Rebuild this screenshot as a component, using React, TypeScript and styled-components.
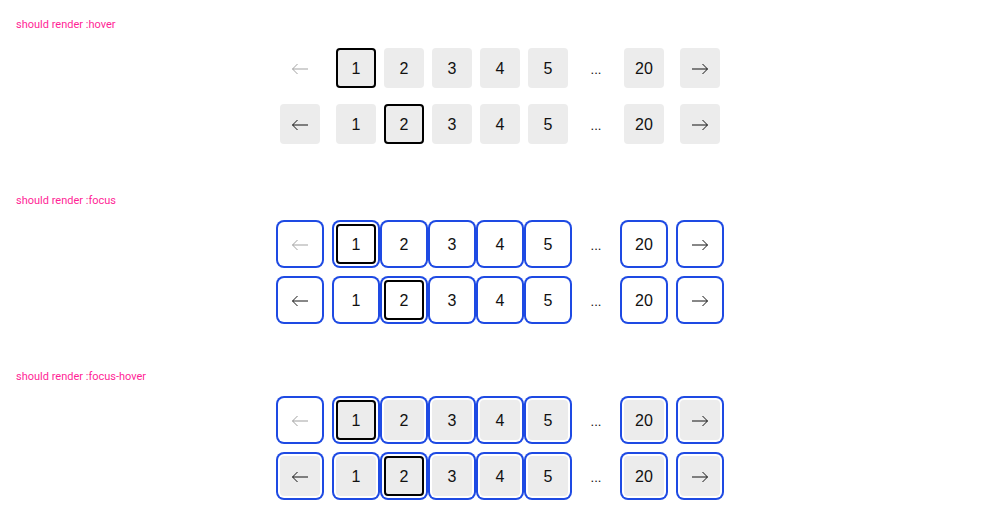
import React from 'react';
import styled, { createGlobalStyle, css } from 'styled-components';

type Mode = 'hover' | 'focus' | 'focus-hover';

const GlobalStyle = createGlobalStyle`
  html, body {
    margin: 0;
    padding: 0;
    background: #ffffff;
  }
`;

const Page = styled.div`
  width: 1000px;
  padding-top: 18px;
  box-sizing: border-box;
`;

const Section = styled.section`
  display: flex;
  flex-direction: column;
  margin-bottom: 50px;
`;

const Label = styled.div`
  font-family: Roboto, 'Liberation Sans', sans-serif;
  font-size: 11px;
  line-height: 13px;
  height: 12px;
  color: #ff1f96;
  padding-left: 16px;
  margin-bottom: 18px;
`;

const Rows = styled.div`
  display: flex;
  flex-direction: column;
  gap: 16px;
`;

const Row = styled.nav`
  display: flex;
  justify-content: center;
  align-items: center;
  gap: 16px;
`;

const Pages = styled.ul`
  display: flex;
  gap: 8px;
  margin: 0;
  padding: 0;
  list-style: none;
`;

const ring = css`
  box-shadow: 0 0 0 2px #ffffff, 0 0 0 4px #1e4ae3;
`;

const PageButton = styled.button<{ $mode: Mode; $selected?: boolean; $disabled?: boolean }>`
  width: 40px;
  height: 40px;
  box-sizing: border-box;
  display: flex;
  align-items: center;
  justify-content: center;
  padding: 1px 0 0;
  margin: 0;
  border-radius: 4px;
  border: 2px solid ${(p) => (p.$selected ? '#000000' : 'transparent')};
  font-family: 'Liberation Sans', Arial, sans-serif;
  font-size: 16px;
  color: ${(p) => (p.$disabled ? '#a3a3a3' : '#111111')};
  cursor: pointer;
  background: ${(p) =>
    p.$mode === 'focus' || p.$disabled ? '#ffffff' : '#ececec'};
  ${(p) => (p.$mode !== 'hover' ? ring : '')}
`;

const Ellipsis = styled.li`
  width: 40px;
  height: 40px;
  box-sizing: border-box;
  padding-top: 3px;
  display: flex;
  align-items: center;
  justify-content: center;
  font-family: 'Liberation Sans', Arial, sans-serif;
  font-size: 13px;
  color: #111111;
`;

const Arrow = ({ dir }: { dir: 'left' | 'right' }) => (
  <svg width="18" height="16" viewBox="0 0 18 16" fill="none">
    {dir === 'left' ? (
      <path d="M17 8H1.5M6.5 3L1.5 8l5 5" stroke="currentColor" strokeWidth="1" />
    ) : (
      <path d="M1 8h15.5M11.5 3l5 5-5 5" stroke="currentColor" strokeWidth="1" />
    )}
  </svg>
);

const pageNumbers = [1, 2, 3, 4, 5];

const Pagination = ({ mode, current }: { mode: Mode; current: number }) => (
  <Row>
    <PageButton $mode={mode} $disabled={current === 1} aria-label="previous">
      <Arrow dir="left" />
    </PageButton>
    <Pages>
      {pageNumbers.map((n) => (
        <li key={n}>
          <PageButton $mode={mode} $selected={n === current}>
            {n}
          </PageButton>
        </li>
      ))}
      <Ellipsis>...</Ellipsis>
      <li>
        <PageButton $mode={mode}>20</PageButton>
      </li>
    </Pages>
    <PageButton $mode={mode} aria-label="next">
      <Arrow dir="right" />
    </PageButton>
  </Row>
);

const modes: Mode[] = ['hover', 'focus', 'focus-hover'];

export default function App() {
  return (
    <>
      <GlobalStyle />
      <Page>
        {modes.map((m) => (
          <Section key={m}>
            <Label>should render :{m}</Label>
            <Rows>
              <Pagination mode={m} current={1} />
              <Pagination mode={m} current={2} />
            </Rows>
          </Section>
        ))}
      </Page>
    </>
  );
}
